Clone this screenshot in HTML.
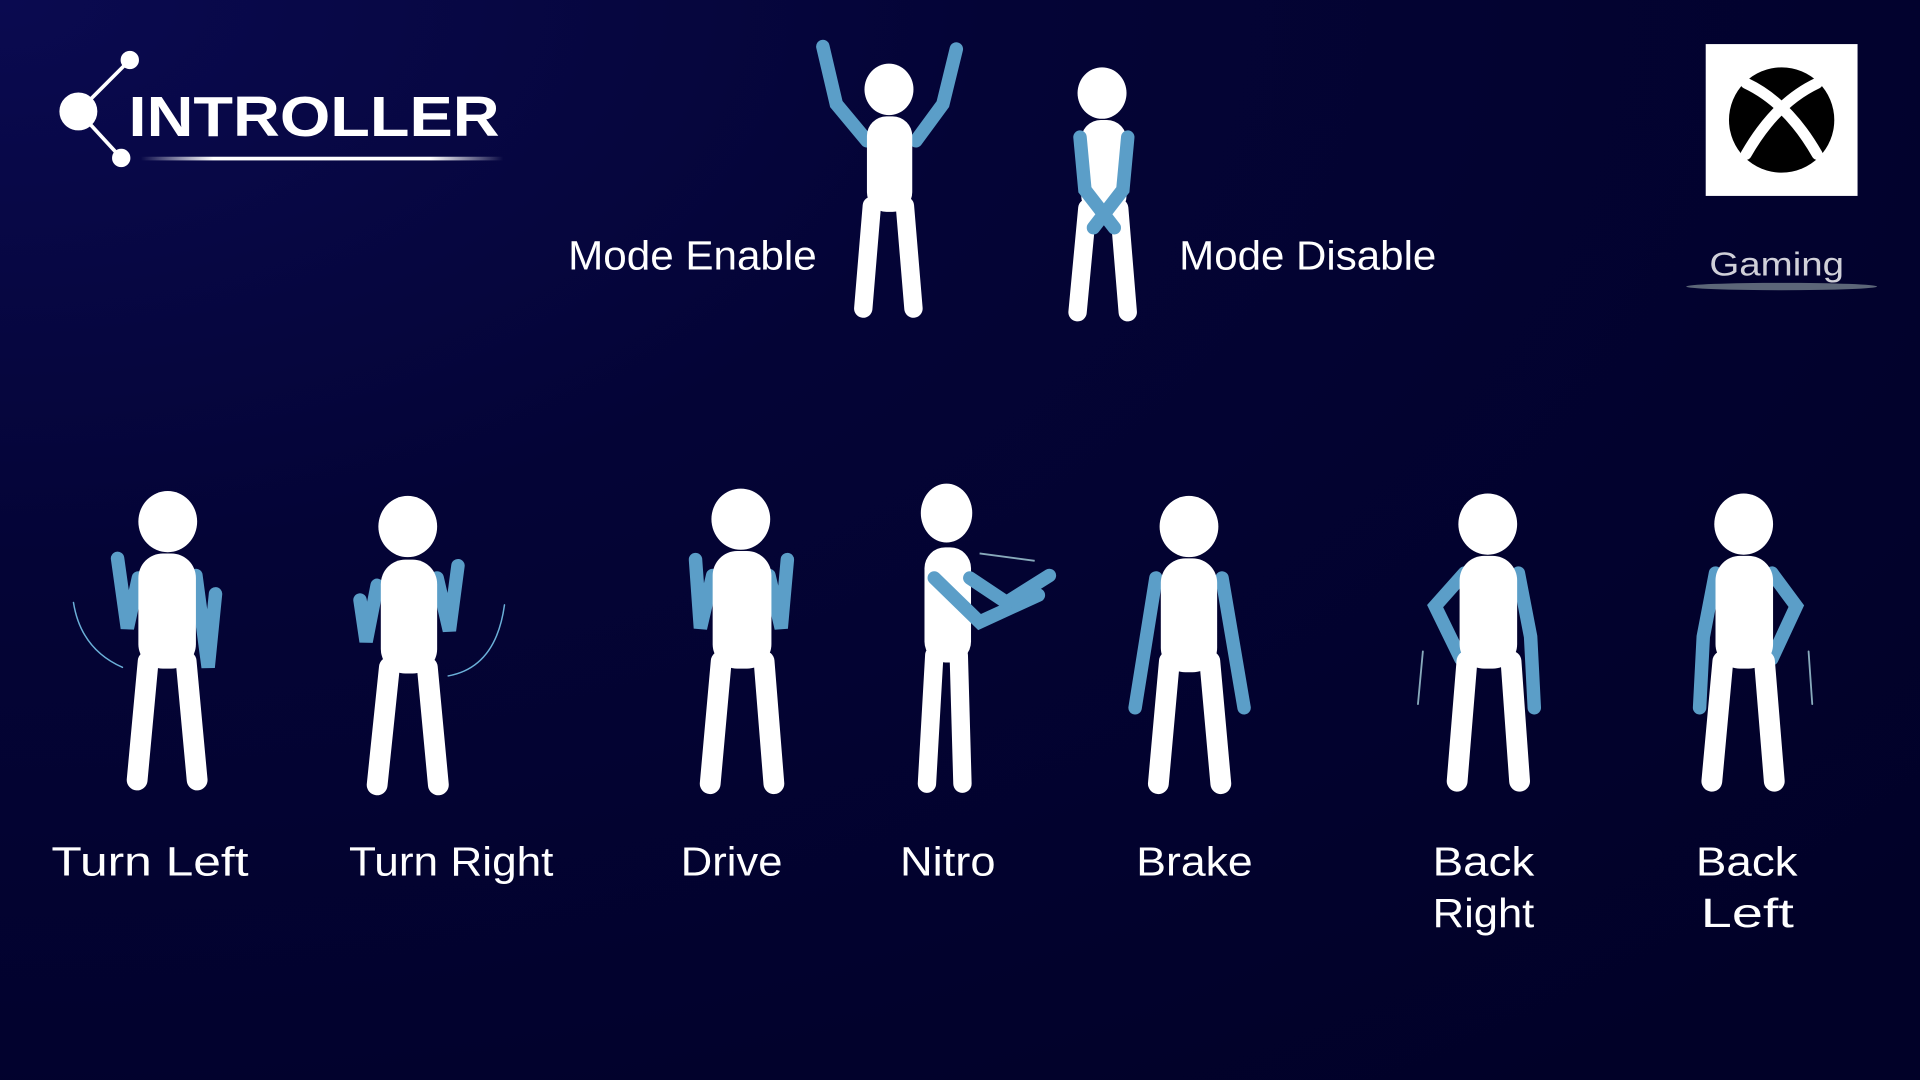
<!DOCTYPE html>
<html><head><meta charset="utf-8"><style>
html,body{margin:0;padding:0;width:1920px;height:1080px;overflow:hidden;background:#02022c}
svg{display:block}
text{font-family:"Liberation Sans",sans-serif;fill:#fff}
</style></head><body>
<svg width="1920" height="1080" viewBox="0 0 1568 882" xmlns="http://www.w3.org/2000/svg">
<defs>
<radialGradient id="bg" cx="0" cy="0" r="1.3" gradientUnits="objectBoundingBox">
<stop offset="0" stop-color="#0a0a50"/><stop offset="0.4" stop-color="#040436"/><stop offset="1" stop-color="#010128"/>
</radialGradient>
<linearGradient id="ul" x1="0" x2="1"><stop offset="0" stop-color="#fff" stop-opacity="0"/><stop offset="0.2" stop-color="#fff"/><stop offset="0.8" stop-color="#fff"/><stop offset="1" stop-color="#fff" stop-opacity="0"/></linearGradient>
</defs>
<rect width="1568" height="882" fill="url(#bg)"/>

<g stroke="#fff" stroke-width="3" fill="#fff">
<line x1="64" y1="91" x2="106" y2="49"/><line x1="64" y1="91" x2="99" y2="129"/>
<circle cx="64" cy="91" r="14"/><circle cx="106" cy="49" r="6"/><circle cx="99" cy="129" r="6"/>
</g>
<text x="105" y="111" font-size="46" font-weight="bold" textLength="303" lengthAdjust="spacingAndGlyphs">INTROLLER</text>
<rect x="115" y="128" width="296" height="3" fill="url(#ul)"/>

<rect x="1393" y="36" width="124" height="124" fill="#fff"/>
<circle cx="1455" cy="98" r="43" fill="#000"/>
<g fill="none" stroke="#fff" stroke-width="9" stroke-linecap="round">
<path d="M1426 68 Q1460 84 1484 126"/>
<path d="M1484 68 Q1450 84 1426 126"/>
</g>
<text x="1396" y="225" font-size="27" style="fill:#d0d0d8" textLength="110" lengthAdjust="spacingAndGlyphs">Gaming</text>
<ellipse cx="1455" cy="234" rx="78" ry="3" fill="#9aa" opacity="0.6"/>

<g stroke-linecap="round" fill="none">
<g stroke="#5b9ec8" stroke-width="11"><path d="M708 115 L683 85 L672 38"/><path d="M748 115 L770 85 L781 40"/></g>
<g stroke="#fff" stroke-width="15"><line x1="712" y1="168" x2="705" y2="252"/><line x1="739" y1="168" x2="746" y2="252"/></g>
<g stroke="#fff" stroke-width="15"><line x1="888" y1="170" x2="880" y2="255"/><line x1="914" y1="170" x2="921" y2="255"/></g>
<g stroke="#5b9ec8" stroke-width="11"><path d="M568 457 L572 513 L582 470"/><path d="M643 457 L638 513 L628 470"/></g>
<g stroke="#fff" stroke-width="17"><line x1="589" y1="540" x2="580" y2="640"/><line x1="624" y1="540" x2="632" y2="640"/></g>
<g stroke="#5b9ec8" stroke-width="11"><path d="M96 456 L104 513 L113 472"/><path d="M160 470 L170 545 L176 485"/></g>
<g stroke="#fff" stroke-width="17"><line x1="121" y1="540" x2="112" y2="637"/><line x1="152" y1="540" x2="161" y2="637"/></g>
<path d="M100 545 Q66 530 60 492" stroke="#6bb0d8" stroke-width="1.2"/>
<g stroke="#5b9ec8" stroke-width="11"><path d="M374 462 L367 515 L357 472"/><path d="M308 478 L299 524 L294 490"/></g>
<g stroke="#fff" stroke-width="17"><line x1="318" y1="545" x2="308" y2="641"/><line x1="349" y1="545" x2="358" y2="641"/></g>
<path d="M366 552 Q405 545 412 494" stroke="#6bb0d8" stroke-width="1.2"/>
<g stroke="#fff" stroke-width="15"><line x1="763" y1="535" x2="757" y2="640"/><line x1="783" y1="535" x2="786" y2="640"/></g>
<g stroke="#fff" stroke-width="17"><line x1="955" y1="540" x2="946" y2="640"/><line x1="988" y1="540" x2="997" y2="640"/></g>
<g stroke="#5b9ec8" stroke-width="11"><line x1="944" y1="472" x2="927" y2="578"/><line x1="998" y1="472" x2="1016" y2="578"/></g>
<g stroke="#5b9ec8" stroke-width="11"><path d="M1196 468 L1172 495 L1193 538"/><path d="M1240 468 L1250 520 L1253 578"/></g>
<g stroke="#fff" stroke-width="17"><line x1="1198" y1="540" x2="1190" y2="638"/><line x1="1234" y1="540" x2="1241" y2="638"/></g>
<line x1="1158" y1="575" x2="1162" y2="532" stroke="#8ab" stroke-width="1.5"/>
<g stroke="#5b9ec8" stroke-width="11"><path d="M1447 468 L1467 495 L1447 538"/><path d="M1401 468 L1391 520 L1388 578"/></g>
<g stroke="#fff" stroke-width="17"><line x1="1407" y1="540" x2="1398" y2="638"/><line x1="1441" y1="540" x2="1449" y2="638"/></g>
<line x1="1480" y1="575" x2="1477" y2="532" stroke="#8ab" stroke-width="1.5"/>
</g>

<g fill="#fff">
<ellipse cx="726" cy="73" rx="20" ry="21"/><rect x="708" y="95" width="37" height="78" rx="16"/>
<ellipse cx="900" cy="76" rx="20" ry="21"/><rect x="883" y="98" width="37" height="78" rx="16"/>
<ellipse cx="137" cy="426" rx="24" ry="25"/><rect x="113" y="452" width="47" height="94" rx="20"/>
<ellipse cx="333" cy="430" rx="24" ry="25"/><rect x="311" y="457" width="46" height="93" rx="20"/>
<ellipse cx="605" cy="424" rx="24" ry="25"/><rect x="582" y="450" width="48" height="96" rx="20"/>
<ellipse cx="773" cy="419" rx="21" ry="24"/><rect x="755" y="447" width="38" height="94" rx="17"/>
<ellipse cx="971" cy="430" rx="24" ry="25"/><rect x="948" y="456" width="46" height="93" rx="20"/>
<ellipse cx="1215" cy="428" rx="24" ry="25"/><rect x="1192" y="454" width="47" height="92" rx="20"/>
<ellipse cx="1424" cy="428" rx="24" ry="25"/><rect x="1401" y="454" width="47" height="92" rx="20"/>
</g>
<g stroke-linecap="round" fill="none" stroke="#5b9ec8" stroke-width="11">
<path d="M882 112 L886 155 L910 186"/><path d="M921 112 L917 155 L893 186"/>
<path d="M763 472 L800 508 L848 486"/><path d="M792 472 L822 492 L857 470"/>
</g>
<line x1="800" y1="452" x2="845" y2="458" stroke="#8ab" stroke-width="1.5"/>

<g font-size="33" lengthAdjust="spacingAndGlyphs">
<text x="464" y="220" textLength="203" lengthAdjust="spacingAndGlyphs">Mode Enable</text>
<text x="963" y="220" textLength="210" lengthAdjust="spacingAndGlyphs">Mode Disable</text>
<text x="42" y="715" textLength="161" lengthAdjust="spacingAndGlyphs">Turn Left</text>
<text x="285" y="715" textLength="167" lengthAdjust="spacingAndGlyphs">Turn Right</text>
<text x="556" y="715" textLength="83" lengthAdjust="spacingAndGlyphs">Drive</text>
<text x="735" y="715" textLength="78" lengthAdjust="spacingAndGlyphs">Nitro</text>
<text x="928" y="715" textLength="95" lengthAdjust="spacingAndGlyphs">Brake</text>
<text x="1170" y="715" textLength="83" lengthAdjust="spacingAndGlyphs">Back</text><text x="1170" y="757" textLength="83" lengthAdjust="spacingAndGlyphs">Right</text>
<text x="1385" y="715" textLength="83" lengthAdjust="spacingAndGlyphs">Back</text><text x="1389" y="757" textLength="76" lengthAdjust="spacingAndGlyphs">Left</text>
</g>
</svg>
</body></html>
